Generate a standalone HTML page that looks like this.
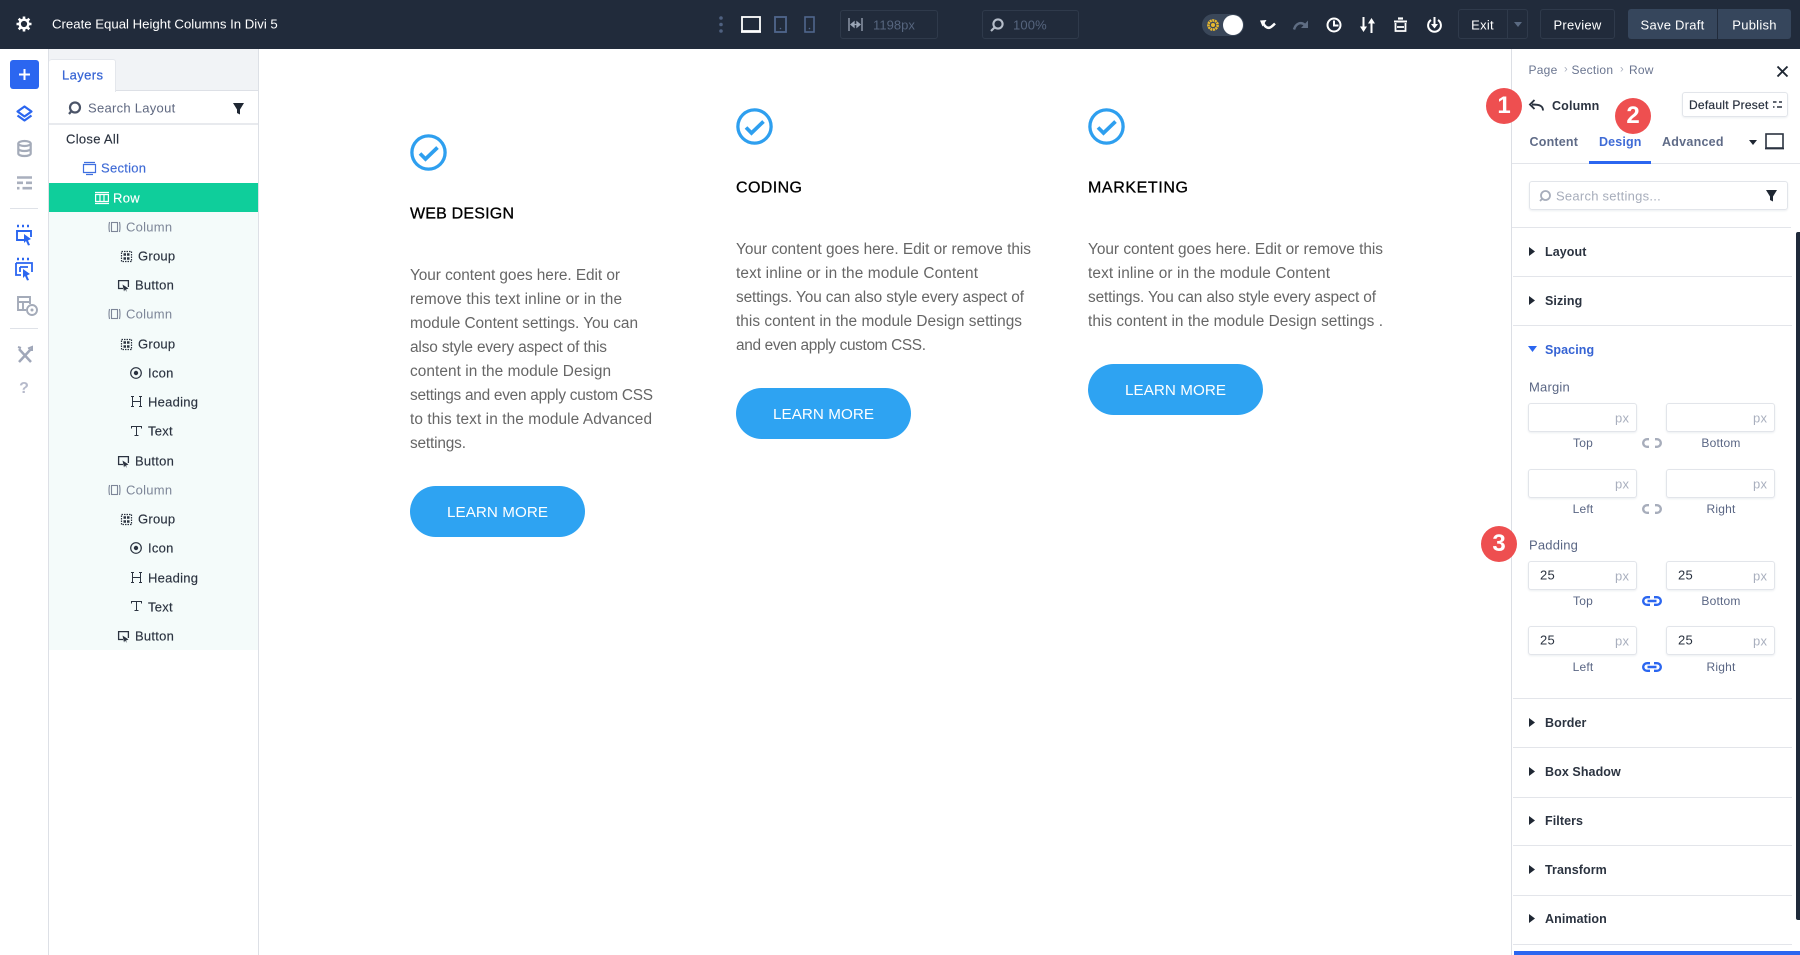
<!DOCTYPE html>
<html><head><meta charset="utf-8"><title>Create Equal Height Columns In Divi 5</title>
<style>
*{box-sizing:border-box}
html,body{margin:0;padding:0;width:1800px;height:955px;overflow:hidden;background:#fff;font-family:"Liberation Sans",sans-serif}
.a{position:absolute}
.t{position:absolute;white-space:nowrap;line-height:1;transform:translateY(-50%);font-size:13px;letter-spacing:.25px}
.c{transform:translate(-50%,-50%)}
svg{position:absolute;overflow:visible}
.top{color:#fff}
.box{position:absolute;border:1px solid #2f3a4b;border-radius:3px}
.lay{color:#2b3340;-webkit-text-stroke:.15px #2b3340}.col{color:#7d8698}
.in{position:absolute;width:109px;height:29px;border:1px solid #e2e5ea;border-radius:3px;background:#fff;box-shadow:0 1px 2px #eceef1}
.px{color:#a9afbe;font-size:13px}
.lb{color:#5a6684;font-size:12px;letter-spacing:.2px}
.sec{color:#2b3340;font-weight:700;font-size:12.5px;letter-spacing:.08px}
.ln{position:absolute;left:1513px;width:279px;height:1px;background:#e3e5ea}
.badge{position:absolute;width:36px;height:36px;border-radius:50%;background:#ee4f50;color:#fff;font-weight:700;font-size:24px;line-height:36px;text-align:center}
.val{color:#2b3340;font-size:13px}
.btn{position:absolute;width:175px;height:51px;border-radius:26px;background:#2ea3f2}
#ct text{font-family:"Liberation Sans",sans-serif}
#ct .p{font-size:15.4px;fill:#666}
#ct .h{font-size:16px;fill:#000;stroke:#000;stroke-width:.3px}
#ct .l{font-size:15.2px;fill:#fff}
</style></head><body>

<!-- top bar -->
<div class="a" style="left:0;top:0;width:1800px;height:49px;background:#212b3b"></div>
<svg style="left:16px;top:16px" width="16" height="16" viewBox="0 0 16 16"><circle cx="8" cy="8" r="4.3" fill="none" stroke="#fff" stroke-width="2.4"/><g stroke="#fff" stroke-width="2.6"><path d="M8 0.5V3.5M8 12.5V15.5M0.5 8H3.5M12.5 8H15.5M2.7 2.7L4.8 4.8M11.2 11.2L13.3 13.3M2.7 13.3L4.8 11.2M11.2 4.8L13.3 2.7"/></g></svg>
<div class="t top" style="left:52px;top:24px;font-size:13.2px;letter-spacing:0">Create Equal Height Columns In Divi 5</div>
<svg style="left:719px;top:16px" width="4" height="17"><circle cx="2" cy="2" r="1.8" fill="#4f6180"/><circle cx="2" cy="8.5" r="1.8" fill="#4f6180"/><circle cx="2" cy="15" r="1.8" fill="#4f6180"/></svg>
<svg style="left:741px;top:16px" width="20" height="17" fill="none"><rect x="1" y="1" width="18" height="14" stroke="#fff" stroke-width="1.8"/><path d="M0 16H20" stroke="#fff" stroke-width="1.8"/></svg>
<svg style="left:774px;top:16px" width="13" height="17" fill="none"><rect x="1" y="1" width="11" height="15" stroke="#50668c" stroke-width="1.8"/><circle cx="6.5" cy="12.5" r=".8" fill="#50668c"/></svg>
<svg style="left:804px;top:16px" width="11" height="17" fill="none"><rect x="1" y="1" width="9" height="15" stroke="#50668c" stroke-width="1.6"/><circle cx="5.5" cy="12.5" r=".8" fill="#50668c"/></svg>
<div class="box" style="left:840px;top:10px;width:98px;height:29px"></div>
<svg style="left:848px;top:18px" width="15" height="13" fill="none" stroke="#9aa5b6" stroke-width="1.3"><path d="M1 0V13M14 0V13M3 6.5H12"/><path d="M3 6.5L6 4V9ZM12 6.5L9 4V9Z" fill="#9aa5b6"/></svg>
<div class="t" style="left:873px;top:24.5px;color:#56657e;font-size:13px;letter-spacing:.05px">1198px</div>
<div class="box" style="left:982px;top:10px;width:97px;height:29px"></div>
<svg style="left:990px;top:18px" width="14" height="14" fill="none"><circle cx="8" cy="6" r="4.6" stroke="#b5bdc9" stroke-width="2.1"/><path d="M4.5 9.5L1 13" stroke="#b5bdc9" stroke-width="2.1"/></svg>
<div class="t" style="left:1013px;top:24.5px;color:#56657e;font-size:13px;letter-spacing:.15px">100%</div>
<div class="a" style="left:1202px;top:14px;width:42px;height:22px;border-radius:11px;background:#3a4759"></div>
<svg style="left:1207px;top:19px" width="12" height="12"><circle cx="6" cy="6" r="4.6" fill="none" stroke="#e8b92f" stroke-width="2.6" stroke-dasharray="2 .6"/><circle cx="6" cy="6" r="2" fill="#e8b92f"/></svg>
<div class="a" style="left:1223px;top:15px;width:20px;height:20px;border-radius:50%;background:#fff"></div>
<svg style="left:1260px;top:19px" width="16" height="12" fill="none"><path d="M3 2.5C4 8 8 10 11 8C12.5 7 13.5 6 15 4.5" stroke="#fff" stroke-width="2.5"/><path d="M0 1.5L6.5 1L2.5 7.5Z" fill="#fff"/></svg>
<svg style="left:1293px;top:19px" width="16" height="12" fill="none"><path d="M1 10.5C3 4 8 2.5 12 6" stroke="#5f6d83" stroke-width="2.5"/><path d="M15 1.5V9H8Z" fill="#5f6d83"/></svg>
<svg style="left:1326px;top:17px" width="16" height="16" fill="none" stroke="#fff" stroke-width="2"><circle cx="8" cy="8" r="6.5"/><path d="M8 3.5V8.5H12.5"/></svg>
<svg style="left:1360px;top:17px" width="15" height="16" fill="none" stroke="#fff" stroke-width="2"><path d="M3.5 0V11M11.5 5V16"/><path d="M0 9.5L3.5 15L7 9.5ZM8 6.5L11.5 1L15 6.5Z" fill="#fff" stroke="none"/></svg>
<svg style="left:1394px;top:17px" width="13" height="15" fill="none" stroke="#fff"><path d="M0 4.5H13" stroke-width="2"/><path d="M4 1.5H9" stroke-width="2.2"/><path d="M1.5 6V14H11.5V6" stroke-width="1.8"/><path d="M3 10H10" stroke-width="1.8"/></svg>
<svg style="left:1427px;top:17px" width="15" height="16" fill="none" stroke="#fff" stroke-width="2"><path d="M4 3A6.4 6.4 0 1 0 11 3"/><path d="M7.5 0V8"/><path d="M4 7L7.5 11.5L11 7Z" fill="#fff" stroke="none"/></svg>
<div class="box" style="left:1458px;top:9px;width:70px;height:30px"></div>
<div class="a" style="left:1507px;top:9px;width:1px;height:30px;background:#2f3a4b"></div>
<div class="t top c" style="left:1482.5px;top:24.5px;font-size:13px">Exit</div>
<div class="a" style="left:1514px;top:22px;border:4px solid transparent;border-top:5px solid #5a6a82"></div>
<div class="box" style="left:1540px;top:9px;width:75px;height:30px"></div>
<div class="t top c" style="left:1577.5px;top:24.5px">Preview</div>
<div class="a" style="left:1628px;top:9px;width:89px;height:30px;border-radius:3px 0 0 3px;background:#36465c"></div>
<div class="t top c" style="left:1672.5px;top:24.5px">Save Draft</div>
<div class="a" style="left:1718px;top:9px;width:73px;height:30px;border-radius:0 3px 3px 0;background:#36465c"></div>
<div class="t top c" style="left:1754.5px;top:24.5px">Publish</div>

<!-- left rail -->
<div class="a" style="left:10px;top:60px;width:29px;height:29px;border-radius:3px;background:#2b66f0"></div>
<svg style="left:18px;top:68px" width="13" height="13"><path d="M6.5 1V12M1 6.5H12" stroke="#fff" stroke-width="2"/></svg>
<svg style="left:16px;top:105px" width="17" height="17" fill="none" stroke="#2b66f0" stroke-width="2.2" stroke-linejoin="round"><path d="M8.5 1.5L15.5 6.5L8.5 11.5L1.5 6.5Z"/><path d="M1.5 10.5L8.5 15.5L15.5 10.5"/></svg>
<svg style="left:17px;top:140px" width="15" height="17" fill="none" stroke="#a4abb9" stroke-width="2.2"><ellipse cx="7.5" cy="3.5" rx="6.2" ry="2.5"/><path d="M1.3 3.5V13.5C1.3 15 4 16 7.5 16S13.700 15 13.700 13.5V3.5M1.3 8.5C1.3 10 4 11 7.5 11S13.700 10 13.700 8.5"/></svg>
<svg style="left:17px;top:176px" width="15" height="14" fill="none" stroke="#a9afbd" stroke-width="2.6"><path d="M0 1.5H15M0 6.8H6M9 6.8H15M0 12.2H2.5M5.5 12.2H15"/></svg>
<div class="a" style="left:10px;top:208px;width:28px;height:1px;background:#dfe2e8"></div>
<svg style="left:16px;top:225px" width="17" height="21" fill="none" stroke="#2b66f0" stroke-width="1.9"><path d="M1 1H3M6 1H8M11 1H13" stroke-width="2.6"/><path d="M8 15H1V6H15V12"/><path d="M8 9L15 14L12 15.5L14 20L12 20.5L10 16L8 18Z" fill="#2b66f0" stroke="none"/></svg>
<svg style="left:15px;top:258px" width="19" height="23" fill="none" stroke="#2b66f0" stroke-width="1.8"><path d="M2 1H4M7 1H9M12 1H14" stroke-width="2.6"/><path d="M1 5H17V14M1 5V17H6"/><path d="M5 9H13M5 9V14"/><path d="M8 11L15 16L12 17.5L14 22L12 22.5L10 18L8 20Z" fill="#2b66f0" stroke="none"/></svg>
<svg style="left:17px;top:296px" width="21" height="20" fill="none" stroke="#a4abb9" stroke-width="1.9"><path d="M9 14H1V1H13V8M1 6H13M6 6V14"/><circle cx="15" cy="14" r="5"/><circle cx="15" cy="14" r="1.5" fill="#a4abb9" stroke="none"/></svg>
<div class="a" style="left:10px;top:328px;width:28px;height:1px;background:#dfe2e8"></div>
<svg style="left:17px;top:347px" width="16" height="16" fill="none" stroke="#a0a7b9" stroke-width="2.5"><path d="M2 15L14 2M2 2L14 15"/><path d="M11 1.5L15 0V4M1 0L4 1" stroke-width="2"/></svg>
<div class="t c" style="left:24px;top:389px;color:#b6bacb;font-size:16px;font-weight:700;letter-spacing:0">?</div>

<!-- layers panel -->
<div class="a" style="left:48px;top:49px;width:211px;height:906px;background:#fff;border-left:1px solid #dde0e6;border-right:1px solid #dde0e6"></div>
<div class="a" style="left:49px;top:49px;width:209px;height:42px;background:#f1f3f6;border-bottom:1px solid #dde0e6"></div>
<div class="a" style="left:49px;top:59px;width:67px;height:33px;background:#fff;border:1px solid #e4e7ec;border-bottom:none;border-left:none;border-radius:3px 3px 0 0"></div>
<div class="t" style="left:62px;top:75px;color:#3563d4;font-size:13px;letter-spacing:.4px;-webkit-text-stroke:.25px #3563d4">Layers</div>
<svg style="left:68px;top:101px" width="13" height="14" fill="none" stroke="#4b5468" stroke-width="2.2"><circle cx="7" cy="6.5" r="5"/><path d="M3.5 10L1 13"/></svg>
<div class="t" style="left:88px;top:107.5px;color:#5f6880;letter-spacing:.28px">Search Layout</div>
<svg style="left:233px;top:103px" width="11" height="12"><path d="M0 0H11L7 6.5V11.5L4 10V6.5Z" fill="#1f2733"/></svg>
<div class="a" style="left:49px;top:123px;width:209px;height:2px;background:#e8eaee"></div>
<div class="t lay" style="left:66px;top:139px;letter-spacing:.3px">Close All</div>
<svg style="left:83px;top:162px" width="13" height="13" fill="none" stroke="#3f6fe0" stroke-width="1.2"><path d="M1 .5H12M.5 2.5H12.5V10.5H.5ZM3 12.5H10"/></svg>
<div class="t" style="left:101px;top:168px;color:#3f6bd6;letter-spacing:.28px;-webkit-text-stroke:.15px #3f6bd6">Section</div>
<div class="a" style="left:49px;top:183px;width:209px;height:29px;background:#0fce9b"></div>
<svg style="left:95px;top:192px" width="14" height="12" fill="none" stroke="#fff" stroke-width="1.2"><path d="M0 .5H14M.6 2.5H13.4V9.5H.6ZM5 2.5V9.5M9 2.5V9.5M0 11.5H14"/></svg>
<div class="t" style="left:113px;top:197.5px;color:#fff;letter-spacing:.3px;-webkit-text-stroke:.15px #fff">Row</div>
<div class="a" style="left:49px;top:212px;width:209px;height:438px;background:#f4fbfa"></div>

<!-- layer rows -->
<svg width="0" height="0" style="left:0;top:0">
<defs>
<g id="ic-col" fill="none" stroke="#7d8698" stroke-width="1.1"><rect x="3.5" y="1.5" width="6" height="9"/><path d="M1.5 1Q.5 6 1.5 11M11.5 1Q12.5 6 11.5 11"/></g>
<g id="ic-grp" fill="none" stroke="#2b3340"><rect x=".5" y=".5" width="10" height="10" stroke-dasharray="1.5 1" stroke-width="1.2"/><path d="M2.5 3.5H5M6 3.5H8.5M2.5 7.5H5M6 7.5H8.5" stroke-width="2.4"/></g>
<g id="ic-btn" fill="none" stroke="#2b3340" stroke-width="1.3"><path d="M5 8.5H.6V.6H10.4V7"/><path d="M4.5 4.5L10.5 8.5L8 9.5L9 12L7 9.5L6 11.5Z" fill="#2b3340" stroke="none"/></g>
<g id="ic-icon" fill="none" stroke="#2b3340" stroke-width="1.2"><circle cx="6" cy="6" r="5.3"/><circle cx="6" cy="6" r="2.2" fill="#2b3340" stroke="none"/></g>
<g id="ic-head" fill="none" stroke="#2b3340" stroke-width="1"><path d="M1.5 .5V10.5M9.5 .5V10.5M1.5 5.5H9.5M0 .5H3M8 .5H11M0 10.5H3M8 10.5H11"/></g>
<g id="ic-text" fill="none" stroke="#2b3340" stroke-width="1"><path d="M5.5 .5V9.5M3.5 9.5H7.5M.5 2.5V.5H10.5V2.5"/></g>
</defs></svg>

<svg style="left:108px;top:221px" width="13" height="12"><use href="#ic-col"/></svg><div class="t col" style="left:126px;top:227px">Column</div>
<svg style="left:121px;top:251px" width="11" height="11"><use href="#ic-grp"/></svg><div class="t lay" style="left:138px;top:256px">Group</div>
<svg style="left:118px;top:280px" width="11" height="12"><use href="#ic-btn"/></svg><div class="t lay" style="left:135px;top:285px">Button</div>
<svg style="left:108px;top:308px" width="13" height="12"><use href="#ic-col"/></svg><div class="t col" style="left:126px;top:314px">Column</div>
<svg style="left:121px;top:339px" width="11" height="11"><use href="#ic-grp"/></svg><div class="t lay" style="left:138px;top:344px">Group</div>
<svg style="left:130px;top:367px" width="12" height="12"><use href="#ic-icon"/></svg><div class="t lay" style="left:148px;top:373px">Icon</div>
<svg style="left:131px;top:396px" width="11" height="11"><use href="#ic-head"/></svg><div class="t lay" style="left:148px;top:402px">Heading</div>
<svg style="left:131px;top:426px" width="11" height="11"><use href="#ic-text"/></svg><div class="t lay" style="left:148px;top:431px">Text</div>
<svg style="left:118px;top:456px" width="11" height="12"><use href="#ic-btn"/></svg><div class="t lay" style="left:135px;top:461px">Button</div>
<svg style="left:108px;top:484px" width="13" height="12"><use href="#ic-col"/></svg><div class="t col" style="left:126px;top:490px">Column</div>
<svg style="left:121px;top:514px" width="11" height="11"><use href="#ic-grp"/></svg><div class="t lay" style="left:138px;top:519px">Group</div>
<svg style="left:130px;top:542px" width="12" height="12"><use href="#ic-icon"/></svg><div class="t lay" style="left:148px;top:548px">Icon</div>
<svg style="left:131px;top:572px" width="11" height="11"><use href="#ic-head"/></svg><div class="t lay" style="left:148px;top:578px">Heading</div>
<svg style="left:131px;top:601px" width="11" height="11"><use href="#ic-text"/></svg><div class="t lay" style="left:148px;top:607px">Text</div>
<svg style="left:118px;top:631px" width="11" height="12"><use href="#ic-btn"/></svg><div class="t lay" style="left:135px;top:636px">Button</div>

<!-- content -->
<div class="btn" style="left:410px;top:486px"></div>
<div class="btn" style="left:736px;top:388px"></div>
<div class="btn" style="left:1088px;top:364px"></div>
<svg id="ct" style="left:0;top:0" width="1800" height="955">
<defs><g id="chk" fill="none" stroke="#2e9fef"><circle cx="18.5" cy="18.5" r="16.6" stroke-width="3.3"/><path d="M10 19.5L15.5 25L27.5 13.5" stroke-width="3.7"/></g></defs>
<use href="#chk" x="410" y="134"/>
<use href="#chk" x="736" y="108"/>
<use href="#chk" x="1088" y="108"/>

<text class="h" x="410" y="218.500" textLength="104">WEB DESIGN</text>
<text class="p" x="410" y="280" textLength="210">Your content goes here. Edit or</text>
<text class="p" x="410" y="304" textLength="212">remove this text inline or in the</text>
<text class="p" x="410" y="328" textLength="228">module Content settings. You can</text>
<text class="p" x="410" y="352" textLength="197">also style every aspect of this</text>
<text class="p" x="410" y="376" textLength="201">content in the module Design</text>
<text class="p" x="410" y="400" textLength="243">settings and even apply custom CSS</text>
<text class="p" x="410" y="424" textLength="242">to this text in the module Advanced</text>
<text class="p" x="410" y="448" textLength="56">settings.</text>
<text class="l" x="447" y="517" textLength="101">LEARN MORE</text>

<text class="h" x="736" y="192.500" textLength="66">CODING</text>
<text class="p" x="736" y="254" textLength="295">Your content goes here. Edit or remove this</text>
<text class="p" x="736" y="278" textLength="242">text inline or in the module Content</text>
<text class="p" x="736" y="302" textLength="288">settings. You can also style every aspect of</text>
<text class="p" x="736" y="326" textLength="286">this content in the module Design settings</text>
<text class="p" x="736" y="350" textLength="190">and even apply custom CSS.</text>
<text class="l" x="773" y="419" textLength="101">LEARN MORE</text>

<text class="h" x="1088" y="192.500" textLength="100">MARKETING</text>
<text class="p" x="1088" y="254" textLength="295">Your content goes here. Edit or remove this</text>
<text class="p" x="1088" y="278" textLength="242">text inline or in the module Content</text>
<text class="p" x="1088" y="302" textLength="288">settings. You can also style every aspect of</text>
<text class="p" x="1088" y="326" textLength="295">this content in the module Design settings .</text>
<text class="l" x="1125" y="395" textLength="101">LEARN MORE</text>
</svg>

<!-- right panel -->
<div class="a" style="left:1511px;top:49px;width:289px;height:906px;background:#fff;border-left:1px solid #dcdfe5"></div>
<div class="t" style="left:1528.5px;top:70px;color:#6a7590;font-size:12px;letter-spacing:.25px">Page</div>
<div class="t" style="left:1564px;top:70px;color:#a9afbe;font-size:11px">›</div>
<div class="t" style="left:1571.5px;top:70px;color:#6a7590;font-size:12px;letter-spacing:.25px">Section</div>
<div class="t" style="left:1620px;top:70px;color:#a9afbe;font-size:11px">›</div>
<div class="t" style="left:1629px;top:70px;color:#6a7590;font-size:12px;letter-spacing:.2px">Row</div>
<svg style="left:1777px;top:66px" width="11" height="11"><path d="M.5 .5L10.5 10.5M10.5 .5L.5 10.5" stroke="#1f2733" stroke-width="1.9"/></svg>
<svg style="left:1529px;top:99px" width="15" height="12" fill="none" stroke="#2b3340" stroke-width="1.9"><path d="M14 11.5C14 7 11 5.5 3 5.5"/><path d="M5.5 1L1 5.5L5.5 10"/></svg>
<div class="t" style="left:1552px;top:105.5px;color:#2b3340;font-weight:700;font-size:12.5px;letter-spacing:.15px">Column</div>
<div class="a" style="left:1682px;top:92px;width:106px;height:25px;border:1px solid #e2e5ea;border-radius:3px;box-shadow:0 1px 2px #eceef1"></div>
<div class="t" style="left:1689px;top:104.5px;color:#2b3340;font-size:12px;letter-spacing:.25px;-webkit-text-stroke:.2px #2b3340">Default Preset</div>
<svg style="left:1773px;top:100px" width="9" height="9" fill="none" stroke="#2b3340" stroke-width="1.6"><path d="M0 2H3.5M6 2H9M0 7H1.5M4 7H9"/></svg>
<div class="t" style="left:1529.5px;top:142px;color:#5f6b87;font-weight:700;font-size:12.5px;letter-spacing:.2px">Content</div>
<div class="t" style="left:1599px;top:142px;color:#3f6bd6;font-weight:700;font-size:12.5px;letter-spacing:.15px">Design</div>
<div class="t" style="left:1662px;top:142px;color:#5f6b87;font-weight:700;font-size:12.5px;letter-spacing:.25px">Advanced</div>
<div class="a" style="left:1749px;top:140px;border:4px solid transparent;border-top:5px solid #1f2733"></div>
<svg style="left:1765px;top:133px" width="20" height="17" fill="none"><rect x="1" y="1" width="17" height="14" stroke="#2b3340" stroke-width="1.6"/><path d="M0 15.6H19" stroke="#2b3340" stroke-width="1.6"/></svg>
<div class="ln" style="top:163px;left:1512px;width:288px"></div>
<div class="a" style="left:1589px;top:161px;width:62px;height:3px;background:#2b66f0"></div>
<div class="a" style="left:1529px;top:181px;width:259px;height:29px;border:1px solid #e2e5ea;border-radius:3px;box-shadow:0 1px 2px #eceef1"></div>
<svg style="left:1539px;top:190px" width="12" height="12" fill="none" stroke="#a7adbb" stroke-width="1.8"><circle cx="6.5" cy="5.5" r="4.5"/><path d="M3.5 8.5L1 11"/></svg>
<div class="t" style="left:1556px;top:196px;color:#a7adbb;letter-spacing:.25px">Search settings...</div>
<svg style="left:1766px;top:190px" width="11" height="12"><path d="M0 0H11L7 6.5V11.5L4 10V6.5Z" fill="#1f2733"/></svg>
<div class="ln" style="top:227px;left:1512px"></div>

<svg width="0" height="0" style="left:0;top:0"><defs><path id="ar" d="M0 0L6 4.5L0 9Z" fill="#1f2733"/></defs></svg>
<svg style="left:1529px;top:247px" width="6" height="9"><use href="#ar"/></svg><div class="t sec" style="left:1545px;top:252px">Layout</div>
<div class="ln" style="top:276px"></div>
<svg style="left:1529px;top:296px" width="6" height="9"><use href="#ar"/></svg><div class="t sec" style="left:1545px;top:301px">Sizing</div>
<div class="ln" style="top:325px"></div>
<svg style="left:1528px;top:346px" width="9" height="6"><path d="M0 0H9L4.5 6Z" fill="#2b66f0"/></svg><div class="t sec" style="left:1545px;top:350px;color:#3563d4">Spacing</div>

<div class="t lb" style="left:1529px;top:387px;font-size:13px">Margin</div>
<div class="in" style="left:1528px;top:403px"></div><div class="t px" style="left:1615px;top:418px">px</div>
<div class="in" style="left:1666px;top:403px"></div><div class="t px" style="left:1753px;top:418px">px</div>
<div class="t lb c" style="left:1583px;top:443px">Top</div><div class="t lb c" style="left:1721px;top:443px">Bottom</div>
<svg style="left:1642px;top:438px" width="20" height="10" fill="none" stroke="#a7adbb" stroke-width="2.4"><path d="M7 1.2H5A3.8 3.8 0 0 0 5 8.8H7M13 1.2H15A3.8 3.8 0 0 1 15 8.8H13"/></svg>
<div class="in" style="left:1528px;top:469px"></div><div class="t px" style="left:1615px;top:484px">px</div>
<div class="in" style="left:1666px;top:469px"></div><div class="t px" style="left:1753px;top:484px">px</div>
<div class="t lb c" style="left:1583px;top:509px">Left</div><div class="t lb c" style="left:1721px;top:509px">Right</div>
<svg style="left:1642px;top:504px" width="20" height="10" fill="none" stroke="#a7adbb" stroke-width="2.4"><path d="M7 1.2H5A3.8 3.8 0 0 0 5 8.8H7M13 1.2H15A3.8 3.8 0 0 1 15 8.8H13"/></svg>

<div class="t lb" style="left:1529px;top:545px;font-size:13px">Padding</div>
<div class="in" style="left:1528px;top:561px"></div><div class="t val" style="left:1540px;top:575px">25</div><div class="t px" style="left:1615px;top:576px">px</div>
<div class="in" style="left:1666px;top:561px"></div><div class="t val" style="left:1678px;top:575px">25</div><div class="t px" style="left:1753px;top:576px">px</div>
<div class="t lb c" style="left:1583px;top:601px">Top</div><div class="t lb c" style="left:1721px;top:601px">Bottom</div>
<svg style="left:1642px;top:596px" width="20" height="10" fill="none" stroke="#2b66f0" stroke-width="2.4"><path d="M8 1.2H5A3.8 3.8 0 0 0 5 8.8H8M12 1.2H15A3.8 3.8 0 0 1 15 8.8H12M5.5 5H14.5"/></svg>
<div class="in" style="left:1528px;top:626px"></div><div class="t val" style="left:1540px;top:640px">25</div><div class="t px" style="left:1615px;top:641px">px</div>
<div class="in" style="left:1666px;top:626px"></div><div class="t val" style="left:1678px;top:640px">25</div><div class="t px" style="left:1753px;top:641px">px</div>
<div class="t lb c" style="left:1583px;top:667px">Left</div><div class="t lb c" style="left:1721px;top:667px">Right</div>
<svg style="left:1642px;top:662px" width="20" height="10" fill="none" stroke="#2b66f0" stroke-width="2.4"><path d="M8 1.2H5A3.8 3.8 0 0 0 5 8.8H8M12 1.2H15A3.8 3.8 0 0 1 15 8.8H12M5.5 5H14.5"/></svg>

<div class="ln" style="top:698px"></div>
<svg style="left:1529px;top:718px" width="6" height="9"><use href="#ar"/></svg><div class="t sec" style="left:1545px;top:723px">Border</div>
<div class="ln" style="top:747px"></div>
<svg style="left:1529px;top:767px" width="6" height="9"><use href="#ar"/></svg><div class="t sec" style="left:1545px;top:772px">Box Shadow</div>
<div class="ln" style="top:797px"></div>
<svg style="left:1529px;top:816px" width="6" height="9"><use href="#ar"/></svg><div class="t sec" style="left:1545px;top:821px">Filters</div>
<div class="ln" style="top:845px"></div>
<svg style="left:1529px;top:865px" width="6" height="9"><use href="#ar"/></svg><div class="t sec" style="left:1545px;top:870px">Transform</div>
<div class="ln" style="top:895px"></div>
<svg style="left:1529px;top:914px" width="6" height="9"><use href="#ar"/></svg><div class="t sec" style="left:1545px;top:919px">Animation</div>
<div class="ln" style="top:944px"></div>
<div class="a" style="left:1796px;top:232px;width:4px;height:688px;background:#1f2a3a;border-radius:2px 0 0 2px"></div>
<div class="a" style="left:1514px;top:951px;width:286px;height:4px;background:#2b66f0"></div>

<div class="badge" style="left:1486px;top:88px">1</div>
<div class="badge" style="left:1615px;top:98px">2</div>
<div class="badge" style="left:1481px;top:526px">3</div>
</body></html>
